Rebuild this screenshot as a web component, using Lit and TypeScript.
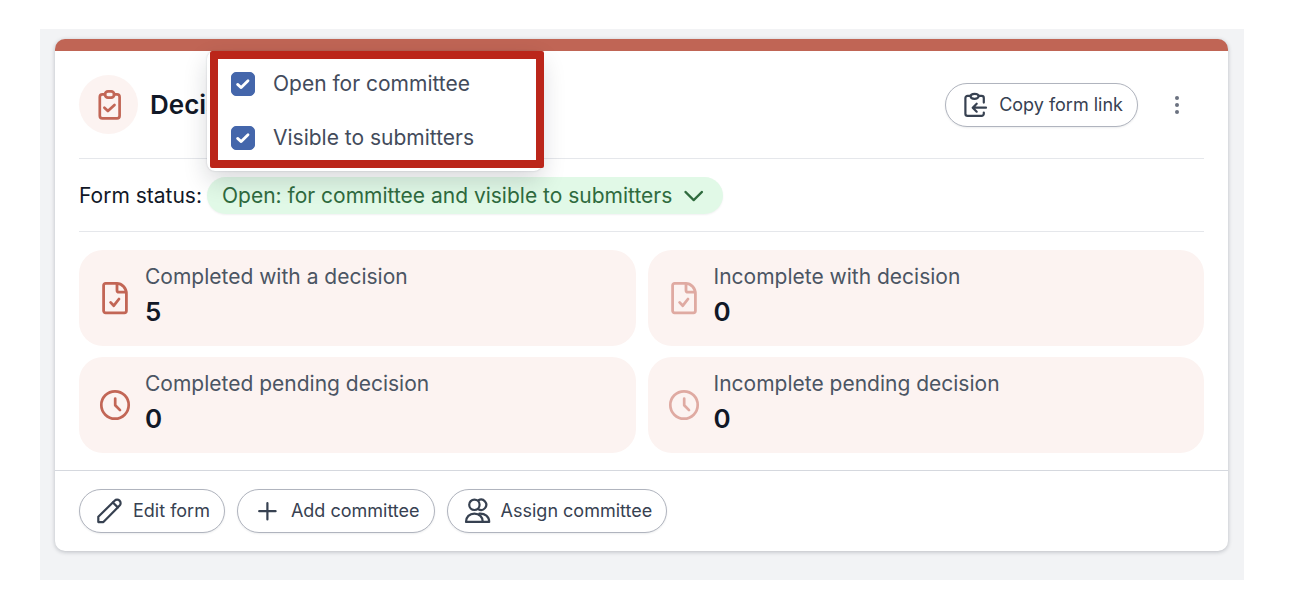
import { LitElement, html, css, svg, TemplateResult } from "lit";
import { customElement, property, state } from "lit/decorators.js";
import { classMap } from "lit/directives/class-map.js";

const shapes: Record<string, { size: number; width: number; body: TemplateResult }> = {
  clipboard: {
    size: 36,
    width: 2.7,
    body: svg`<path d="M14 7.4h-2.6a2.6 2.6 0 0 0-2.6 2.6v18.8a2.6 2.6 0 0 0 2.6 2.6h14.6a2.6 2.6 0 0 0 2.6-2.6V10a2.6 2.6 0 0 0-2.6-2.6H23"/>
      <rect x="14" y="4.4" width="9.2" height="6.2" rx="3"/>
      <path d="M13.4 20.8l3.5 3.3 6.6-6.2"/>`,
  },
  file: {
    size: 36,
    width: 2.8,
    body: svg`<path d="M8.6 3.4h11c5.6 0 9.8 4.6 9.8 10.4v17a2 2 0 0 1-2 2H8.6a2 2 0 0 1-2-2V5.4a2 2 0 0 1 2-2z"/>
      <path d="M20 3.8v6.4a2 2 0 0 0 2 2h7"/>
      <path d="M13.6 22.4l3.2 3.3 5.2-6.7"/>`,
  },
  clock: {
    size: 36,
    width: 2.7,
    body: svg`<circle cx="18" cy="18" r="13.7"/><path d="M18.2 11.6v6.6l4.8 4.9"/>`,
  },
  copy: {
    size: 24,
    width: 2.2,
    body: svg`<path d="M7 2.9H4.6a2.2 2.2 0 0 0-2.2 2.2v15.6a2.2 2.2 0 0 0 2.2 2.2h14a2.2 2.2 0 0 0 2.2-2.2v-1.2M20.8 9.6V5.1a2.2 2.2 0 0 0-2.2-2.2H16"/>
      <ellipse cx="11.6" cy="3.3" rx="4" ry="2.5"/>
      <path d="M23 14.7H10M13.7 10.7l-4 4 4 4"/>`,
  },
  pencil: {
    size: 24,
    width: 2.2,
    body: svg`<path d="M1.3 23.1v-5.3L17.6 1.7a3.5 3.5 0 0 1 5 4.9L6.4 23.1z"/><path d="M15.9 3.5l4.9 4.9"/>`,
  },
  plus: {
    size: 24,
    width: 2.2,
    body: svg`<path d="M12.4 4v16.4M4.2 12.2h16.4"/>`,
  },
  people: {
    size: 24,
    width: 2.2,
    body: svg`<circle cx="9.4" cy="5.8" r="5.2"/>
      <path d="M13.4 1.3A5.2 5.2 0 1 1 13.4 10.3"/>
      <path d="M1 22.9c0-5 3.5-8.3 8.4-8.3s8.4 3.3 8.4 8.3z"/>
      <path d="M14.4 14.6c5.6-.3 9.8 3 9.8 8.3h-6.4"/>`,
  },
  chevron: {
    size: 24,
    width: 2.2,
    body: svg`<path d="M3.4 7.9l8.3 8.2 8.3-8.2"/>`,
  },
};

@customElement("line-icon")
class LineIcon extends LitElement {
  static styles = css`
    :host { display: inline-flex; flex: none; }
    .glyph {
      display: block;
      overflow: visible;
      fill: none;
      stroke: currentColor;
      stroke-linecap: round;
      stroke-linejoin: round;
    }
  `;

  @property() name = "plus";

  render() {
    const s = shapes[this.name];
    return html`<svg class="glyph" width=${s.size} height=${s.size} viewBox="0 0 ${s.size} ${s.size}" stroke-width=${s.width} aria-hidden="true">${s.body}</svg>`;
  }
}

@customElement("stat-tile")
class StatTile extends LitElement {
  static styles = css`
    :host { display: block; }
    .tile {
      display: flex;
      align-items: center;
      gap: 12px;
      padding: 13px 18px;
      border-radius: 24px;
      background: #fcf3f1;
    }
    .icon { display: flex; color: #c26656; }
    .faded { color: #dfaaa2; }
    .label { font-size: 21px; line-height: 28px; color: #4b5563; }
    .value { font-size: 26px; line-height: 42px; font-weight: 600; color: #111827; }
  `;

  @property() icon = "file";
  @property() label = "";
  @property({ type: Number }) value = 0;
  @property({ type: Boolean }) faded = false;

  render() {
    return html`<div class="tile">
      <span class=${classMap({ icon: true, faded: this.faded })}><line-icon name=${this.icon}></line-icon></span>
      <div>
        <div class="label">${this.label}</div>
        <div class="value">${this.value}</div>
      </div>
    </div>`;
  }
}

@customElement("app-root")
class AppRoot extends LitElement {
  static styles = css`
    :host {
      display: block;
      padding: 29px 46px 28px 40px;
      background: #fff;
      color: #111827;
      font-family: Inter, "Liberation Sans", sans-serif;
      font-size: 21px;
      line-height: 28px;
    }
    .page { padding: 10px 16px 29px 15px; background: #f2f3f5; }
    .card {
      border-top: 12px solid #c06555;
      border-radius: 10px;
      background: #fff;
      box-shadow: 0 1px 4px rgba(17, 24, 39, 0.25);
    }
    .body { padding: 0 24px 17px; }
    .header {
      display: flex;
      align-items: center;
      gap: 12px;
      padding: 24px 0;
      border-bottom: 1px solid #e5e7eb;
    }
    .badge {
      display: flex;
      align-items: center;
      justify-content: center;
      width: 59px;
      height: 59px;
      border-radius: 50%;
      background: #fcf3f1;
      color: #c26656;
    }
    .title { flex: 1; margin: 0; font-size: 26px; line-height: 36px; font-weight: 600; }
    button { font: inherit; cursor: pointer; }
    .action {
      display: flex;
      align-items: center;
      gap: 12px;
      box-sizing: border-box;
      height: 44px;
      padding: 0 14px 0 17px;
      border: 1px solid #b0b4be;
      border-radius: 22px;
      background: #fff;
      box-shadow: 0 1px 2px rgba(17, 24, 39, 0.08);
      color: #374151;
      font-size: 18px;
      white-space: nowrap;
    }
    .more {
      display: flex;
      align-items: center;
      justify-content: center;
      width: 54px;
      height: 44px;
      padding: 0;
      border: 0;
      background: none;
      color: #6b7280;
    }
    .dots { display: block; fill: currentColor; }
    .status {
      display: flex;
      align-items: center;
      gap: 5px;
      padding: 18px 0 17px;
      border-bottom: 1px solid #e5e7eb;
    }
    .picker { position: relative; }
    .pill {
      display: flex;
      align-items: center;
      gap: 10px;
      height: 37px;
      padding: 0 17px 0 15px;
      border: 0;
      border-radius: 19px;
      background: #e1f9e7;
      box-shadow: 0 1px 2px rgba(17, 24, 39, 0.06);
      color: #2f6b3e;
      white-space: nowrap;
    }
    .menu {
      position: absolute;
      left: 0;
      bottom: calc(100% + 6px);
      box-sizing: border-box;
      width: 335px;
      padding: 6px 24px;
      border-radius: 8px;
      background: #fff;
      box-shadow: 0 0 2px rgba(17, 24, 39, 0.2), 0 10px 24px rgba(17, 24, 39, 0.16);
    }
    .option {
      display: flex;
      align-items: center;
      gap: 18px;
      height: 54px;
      color: #434b5b;
      cursor: pointer;
    }
    .box {
      appearance: none;
      width: 24px;
      height: 24px;
      margin: 0;
      border: 1px solid #4466ab;
      border-radius: 5px;
    }
    .box:checked {
      background: #4466ab
        url("data:image/svg+xml,%3Csvg xmlns='http://www.w3.org/2000/svg' viewBox='0 0 22 22' fill='none' stroke='white' stroke-width='2.8' stroke-linecap='round' stroke-linejoin='round'%3E%3Cpath d='M5.6 11.4l3.6 3.2 6.8-6.8'/%3E%3C/svg%3E")
        center / 22px 22px no-repeat;
    }
    .outline {
      position: absolute;
      inset: 0 -2px 3px 3px;
      border: 8px solid #bb261a;
      border-radius: 2px;
      pointer-events: none;
    }
    .stats {
      display: grid;
      grid-template-columns: 1fr 1fr;
      gap: 11px 12px;
      padding-top: 18px;
    }
    .footer {
      display: flex;
      gap: 12px;
      padding: 18px 24px;
      border-top: 1px solid #d5d8de;
    }
  `;

  @state() private committee = true;
  @state() private submitters = true;

  render() {
    return html`<main class="page">
      <section class="card">
        <div class="body">
          <header class="header">
            <span class="badge"><line-icon name="clipboard"></line-icon></span>
            <h2 class="title">Decision</h2>
            <button class="action"><line-icon name="copy"></line-icon>Copy form link</button>
            <button class="more" aria-label="More options">
              <svg class="dots" width="6" height="20" viewBox="0 0 6 20"><circle cx="3" cy="3" r="2" /><circle cx="3" cy="10" r="2" /><circle cx="3" cy="17" r="2" /></svg>
            </button>
          </header>
          <div class="status">
            <span>Form status:</span>
            <div class="picker">
              <button class="pill" aria-expanded="true">Open: for committee and visible to submitters<line-icon name="chevron"></line-icon></button>
              <div class="menu">
                <label class="option">
                  <input class="box" type="checkbox" .checked=${this.committee} @change=${() => (this.committee = !this.committee)} />
                  Open for committee
                </label>
                <label class="option">
                  <input class="box" type="checkbox" .checked=${this.submitters} @change=${() => (this.submitters = !this.submitters)} />
                  Visible to submitters
                </label>
                <div class="outline"></div>
              </div>
            </div>
          </div>
          <div class="stats">
            <stat-tile icon="file" label="Completed with a decision" value="5"></stat-tile>
            <stat-tile icon="file" label="Incomplete with decision" value="0" faded></stat-tile>
            <stat-tile icon="clock" label="Completed pending decision" value="0"></stat-tile>
            <stat-tile icon="clock" label="Incomplete pending decision" value="0" faded></stat-tile>
          </div>
        </div>
        <footer class="footer">
          <button class="action"><line-icon name="pencil"></line-icon>Edit form</button>
          <button class="action"><line-icon name="plus"></line-icon>Add committee</button>
          <button class="action"><line-icon name="people"></line-icon>Assign committee</button>
        </footer>
      </section>
    </main>`;
  }
}
